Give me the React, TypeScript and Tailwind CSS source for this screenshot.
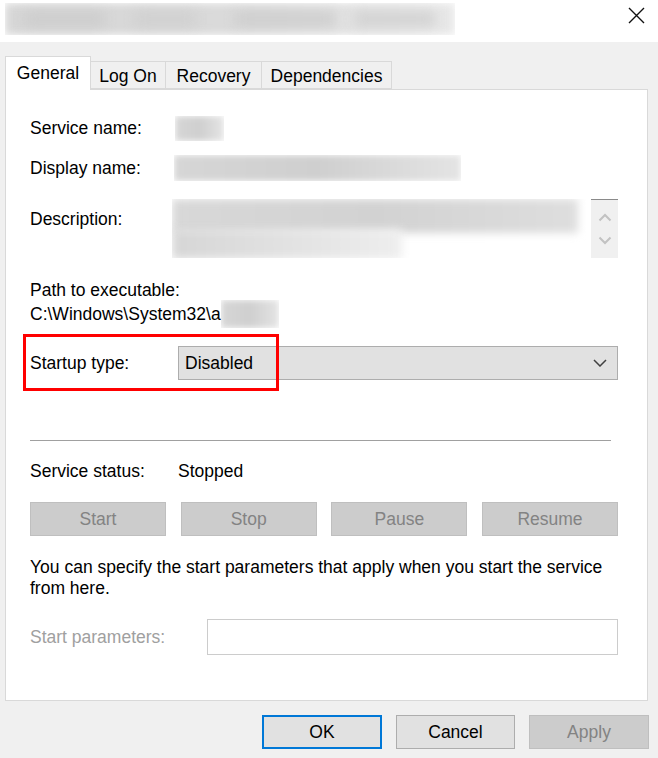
import React from "react";

const FONT = "'Liberation Sans', Arial, sans-serif";

function Blur({ w, h, className = "" }: { w: string; h: string; className?: string }) {
  return (
    <div className={`${w} ${h} ${className} relative overflow-hidden`}>
      <div className="absolute inset-0 bg-gradient-to-r from-[#d6d6d6] via-[#cfcfcf] to-[#e4e4e4] blur-[3px]" />
    </div>
  );
}

function DisabledBtn({ label }: { label: string }) {
  return (
    <div className="w-[136px] h-[34px] bg-[#cccccc] border border-[#bfbfbf] flex items-center justify-center text-[#838383]">
      {label}
    </div>
  );
}

export default function App() {
  return (
    <div
      className="w-[658px] h-[758px] bg-[#f0f0f0] flex flex-col text-black text-[17.5px] leading-[24px] overflow-hidden"
      style={{ fontFamily: FONT }}
    >
      {/* Title bar */}
      <div className="h-[42px] bg-white flex justify-between items-start shrink-0">
        <div className="ml-[5px] mt-[3px] w-[450px] h-[32px] relative overflow-hidden">
          <div className="absolute inset-0 bg-gradient-to-r from-[#d6d6d6] via-[#dadada] to-[#e8e8e8] blur-[4px]" />
          <div className="absolute left-[20px] top-[9px] w-[80px] h-[14px] bg-[#cdcdcd] blur-[6px]" />
          <div className="absolute left-[130px] top-[9px] w-[60px] h-[14px] bg-[#d0d0d0] blur-[6px]" />
          <div className="absolute left-[230px] top-[9px] w-[100px] h-[14px] bg-[#cecece] blur-[6px]" />
          <div className="absolute left-[350px] top-[9px] w-[80px] h-[14px] bg-[#d2d2d2] blur-[6px]" />
        </div>
        <div className="mt-[7px] mr-[13px] w-[17px] h-[17px]">
          <svg width="17" height="17" viewBox="0 0 17 17">
            <path d="M1 1 L16 16 M16 1 L1 16" stroke="#111" strokeWidth="1.4" />
          </svg>
        </div>
      </div>

      {/* Tabs */}
      <div className="mt-[14px] pl-[5px] flex items-end h-[33px] shrink-0 relative z-10">
        <div className="w-[86px] h-[34px] -mb-px bg-white border border-b-0 border-[#d9d9d9] flex justify-center pt-[4px]">
          General
        </div>
        <div className="w-[75px] h-[28px] bg-[#f0f0f0] border border-l-0 border-[#d9d9d9] flex justify-center pt-[2px]">
          Log On
        </div>
        <div className="w-[96px] h-[28px] bg-[#f0f0f0] border border-l-0 border-[#d9d9d9] flex justify-center pt-[2px]">
          Recovery
        </div>
        <div className="w-[130px] h-[28px] bg-[#f0f0f0] border border-l-0 border-[#d9d9d9] flex justify-center pt-[2px]">
          Dependencies
        </div>
      </div>

      {/* Panel */}
      <div className="ml-[5px] w-[643px] h-[612px] bg-white border border-[#d9d9d9] shrink-0 flex flex-col pl-[24px] pr-[29px]">
        <div className="mt-[25px] h-[26px] flex items-center">
          <div className="w-[145px]">Service name:</div>
          <Blur w="w-[49px]" h="h-[25px]" />
        </div>
        <div className="mt-[14px] h-[26px] flex items-center">
          <div className="w-[144px]">Display name:</div>
          <Blur w="w-[287px]" h="h-[26px]" />
        </div>
        <div className="mt-[18px] h-[59px] flex items-start">
          <div className="w-[142px] pt-[8px]">Description:</div>
          <div className="flex-1 h-[59px] flex border-t border-[#8a8a8a]">
            <div className="flex-1 relative -mt-px overflow-hidden bg-white">
              <div className="absolute left-0 top-0 w-[406px] h-[34px] bg-gradient-to-r from-[#d8d8d8] via-[#d2d2d2] to-[#dedede] blur-[4px]" />
              <div className="absolute left-0 top-[30px] w-[230px] h-[30px] bg-gradient-to-r from-[#d6d6d6] to-[#eeeeee] blur-[5px]" />
            </div>
            <div className="w-[27px] h-full bg-[#f0f0f0] flex flex-col items-center justify-around py-[6px]">
              <svg width="14" height="9" viewBox="0 0 14 9">
                <path d="M1.5 7.5 L7 2 L12.5 7.5" stroke="#c2c2c2" strokeWidth="2" fill="none" />
              </svg>
              <svg width="14" height="9" viewBox="0 0 14 9">
                <path d="M1.5 1.5 L7 7 L12.5 1.5" stroke="#c2c2c2" strokeWidth="2" fill="none" />
              </svg>
            </div>
          </div>
        </div>
        <div className="mt-[20px] h-[24px]">Path to executable:</div>
        <div className="h-[24px] flex items-center">
          <span>C:\Windows\System32\a</span>
          <Blur w="w-[58px]" h="h-[28px]" />
        </div>
        <div className="mt-[8px] h-[57px] relative flex items-center">
          <div className="absolute left-[-7px] top-0 w-[256px] h-[57px] border-[3px] border-[#ff0000] z-10 pointer-events-none" />
          <div className="w-[148px]">Startup type:</div>
          <div className="flex-1 h-[34px] bg-[#e1e1e1] border border-[#adadad] flex items-center justify-between pl-[6px] pr-[10px]">
            <span>Disabled</span>
            <svg width="14" height="8" viewBox="0 0 14 8">
              <path d="M1 1 L7 7 L13 1" stroke="#404040" strokeWidth="1.5" fill="none" />
            </svg>
          </div>
        </div>
        <div className="mt-[49px] w-[581px] h-[2px] border-t border-[#a0a0a0] border-b border-b-white" />
        <div className="mt-[17px] h-[24px] flex">
          <div className="w-[148px]">Service status:</div>
          <div>Stopped</div>
        </div>
        <div className="mt-[19px] flex justify-between">
          <DisabledBtn label="Start" />
          <DisabledBtn label="Stop" />
          <DisabledBtn label="Pause" />
          <DisabledBtn label="Resume" />
        </div>
        <div className="mt-[21px] leading-[21px]">
          You can specify the start parameters that apply when you start the service
          <br />
          from here.
        </div>
        <div className="mt-[20px] h-[36px] flex items-center">
          <div className="w-[177px] text-[#a0a0a0]">Start parameters:</div>
          <div className="flex-1 h-[36px] bg-white border border-[#cccccc]" />
        </div>
      </div>

      {/* Bottom buttons */}
      <div className="mt-[14px] flex justify-end gap-[14px] pr-[9px]">
        <div className="w-[120px] h-[34px] bg-[#e1e1e1] border-2 border-[#0078d7] flex items-center justify-center">
          OK
        </div>
        <div className="w-[119px] h-[34px] bg-[#e1e1e1] border border-[#adadad] flex items-center justify-center">
          Cancel
        </div>
        <div className="w-[120px] h-[34px] bg-[#cccccc] border border-[#bfbfbf] flex items-center justify-center text-[#838383]">
          Apply
        </div>
      </div>
    </div>
  );
}
